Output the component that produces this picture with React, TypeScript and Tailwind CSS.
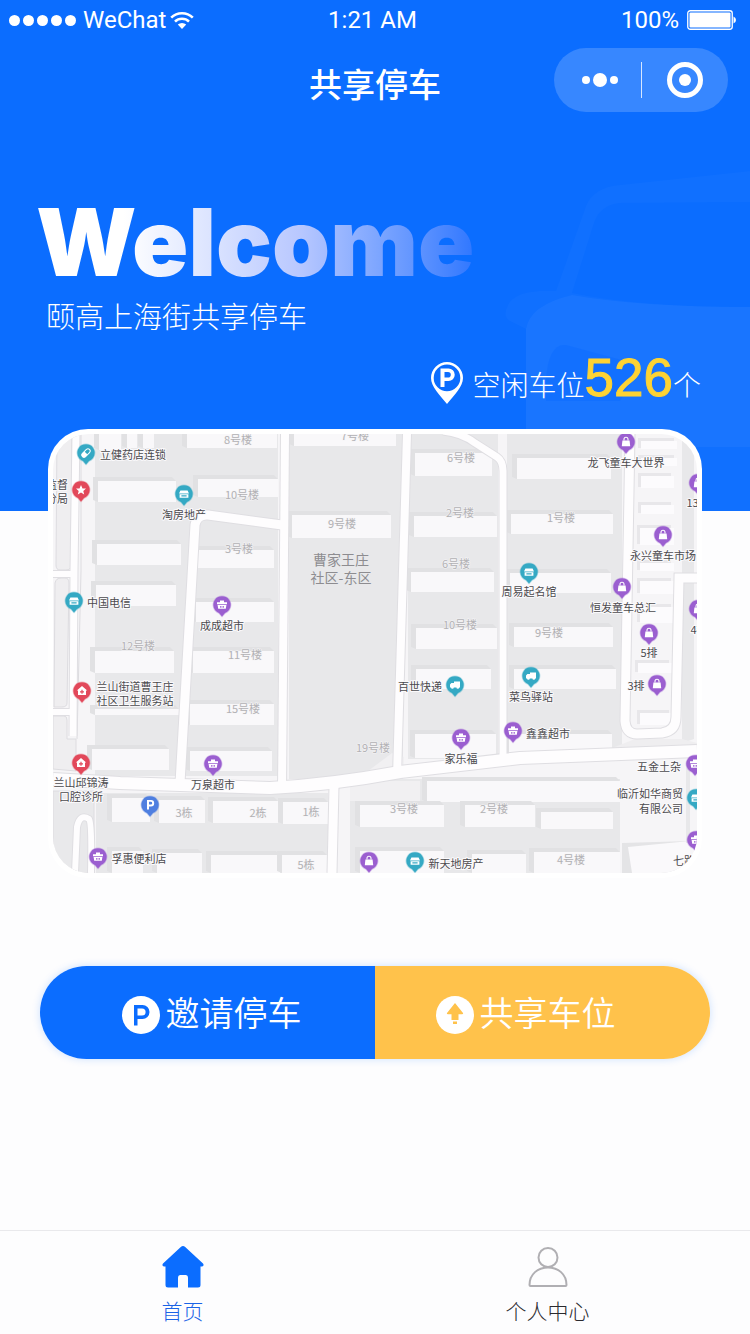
import type { ReactNode } from 'react';

type Point = [number, number];
type Rect = [number, number, number, number];
type PinKind = 'pill' | 'star' | 'store' | 'basket' | 'bag' | 'clinic' | 'truck' | 'parking';

const TEAL = '#35a9c4';
const RED = '#e2485a';
const PURPLE = '#9b5fd0';
const BLUE = '#4f7fe0';

const blocks: Rect[] = [
  [95, 433, 183, 342],
  [289, 433, 114, 345],
  [408, 433, 90, 325],
  [507, 433, 115, 318],
  [602, 433, 20, 318],
  [96, 792, 232, 80],
  [350, 778, 270, 94],
];

const buildings: Rect[] = [
  [99, 433, 22, 16], [127, 433, 10, 14], [143, 433, 11, 14],
  [98, 480, 78, 21], [97, 543, 84, 21], [96, 584, 80, 21], [95, 650, 79, 22], [95, 708, 84, 6], [92, 748, 77, 21],
  [187, 433, 90, 14], [198, 478, 80, 18], [196, 549, 78, 18], [196, 601, 78, 20], [193, 650, 81, 22], [190, 703, 84, 21], [190, 750, 82, 20],
  [294, 433, 102, 12], [292, 514, 99, 23],
  [415, 452, 77, 23], [414, 515, 83, 21], [411, 571, 83, 20], [416, 627, 81, 21], [416, 668, 75, 20], [415, 733, 81, 24],
  [517, 457, 94, 21], [511, 513, 102, 20], [510, 572, 101, 20], [514, 626, 99, 20], [514, 668, 102, 20], [509, 733, 103, 20],
  [112, 797, 38, 24], [159, 799, 46, 23], [213, 800, 65, 22], [283, 801, 45, 22],
  [112, 850, 31, 22], [157, 852, 45, 20], [211, 854, 69, 18], [282, 854, 45, 18],
  [427, 780, 193, 21], [360, 804, 84, 22], [465, 804, 70, 22], [541, 811, 72, 17],
  [360, 850, 84, 22], [472, 853, 54, 19], [534, 851, 86, 21],
];

const eastBuildings: Rect[] = [
  [641, 440, 36, 8], [641, 457, 36, 8], [641, 475, 33, 12], [641, 504, 33, 9], [640, 527, 34, 17],
  [640, 562, 34, 8], [640, 580, 34, 13], [640, 606, 34, 16], [638, 662, 34, 10], [640, 712, 32, 12],
];

const roads: { d: string; w: number }[] = [
  { d: 'M76 433 L74 570 L73 735', w: 7 },
  { d: 'M53 573 H74 M53 711 H70', w: 6 },
  { d: 'M180 782 L195 524 Q197 513 208 514 L282 524', w: 9 },
  { d: 'M285 433 L282 790', w: 8 },
  { d: 'M407 433 L397 775', w: 8 },
  { d: 'M443 430 Q462 432 475 442 L497 456 Q503 460 503 470 V762', w: 7 },
  { d: 'M630 433 L625 720 Q626 733 637 733 L662 732 Q676 730 676 716 L679 577 H697', w: 9 },
  { d: 'M334 785 L332 872', w: 9 },
  { d: 'M75 872 L77 826 Q80 812 89 818 Q92 822 91 872', w: 6 },
  { d: 'M53 778 L120 782 L270 787 Q330 784 400 771 L520 757 L697 750', w: 12 },
];

const greyLabels: [string, number, number][] = [
  ['8号楼', 238, 438], ['7号楼', 355, 434], ['6号楼', 461, 456], ['10号楼', 242, 493], ['9号楼', 342, 522],
  ['2号楼', 460, 511], ['1号楼', 561, 516], ['3号楼', 239, 547], ['6号楼', 456, 562], ['12号楼', 138, 644],
  ['10号楼', 460, 623], ['9号楼', 549, 631], ['11号楼', 245, 653], ['15号楼', 243, 707], ['19号楼', 373, 746],
  ['3栋', 184, 811], ['2栋', 258, 811], ['1栋', 311, 810], ['5栋', 306, 863],
  ['3号楼', 404, 807], ['2号楼', 494, 807], ['4号楼', 571, 858],
];

const placeLabels: [string, number, number][] = [
  ['立健药店连锁', 133, 453], ['监督', 57, 483], ['分局', 57, 497], ['淘房地产', 184, 513], ['中国电信', 109, 601],
  ['成成超市', 222, 624], ['兰山街道曹王庄', 135, 685], ['社区卫生服务站', 135, 699], ['兰山邱锦涛', 81, 781], ['口腔诊所', 81, 795],
  ['万泉超市', 213, 783], ['孚惠便利店', 139, 857], ['龙飞童车大世界', 626, 461], ['13排', 698, 501], ['永兴童车市场', 663, 554],
  ['周易起名馆', 529, 590], ['恒发童车总汇', 623, 606], ['4排', 699, 628], ['5排', 649, 651], ['百世快递', 420, 685],
  ['菜鸟驿站', 531, 695], ['3排', 636, 684], ['鑫鑫超市', 548, 732], ['家乐福', 461, 757], ['五金土杂', 659, 765],
  ['临沂如华商贸', 650, 792], ['有限公司', 661, 807], ['七路', 684, 859], ['新天地房产', 456, 862],
];

const pins: [PinKind, string, number, number][] = [
  ['pill', TEAL, 86, 452], ['star', RED, 81, 489], ['store', TEAL, 184, 493], ['store', TEAL, 74, 600],
  ['basket', PURPLE, 222, 604], ['clinic', RED, 82, 690], ['clinic', RED, 81, 762], ['basket', PURPLE, 213, 763],
  ['parking', BLUE, 150, 804], ['basket', PURPLE, 98, 856], ['bag', PURPLE, 626, 441], ['bag', PURPLE, 698, 482],
  ['bag', PURPLE, 663, 534], ['store', TEAL, 529, 571], ['bag', PURPLE, 622, 586], ['bag', PURPLE, 698, 608],
  ['bag', PURPLE, 649, 632], ['truck', TEAL, 455, 684], ['truck', TEAL, 531, 675], ['bag', PURPLE, 657, 683],
  ['basket', PURPLE, 461, 737], ['basket', PURPLE, 513, 730], ['basket', PURPLE, 695, 763], ['store', TEAL, 696, 797],
  ['basket', PURPLE, 696, 839], ['bag', PURPLE, 369, 860], ['store', TEAL, 415, 860],
];

const glyphs: Record<PinKind, ReactNode> = {
  pill: (
    <g transform="rotate(45)">
      <rect x="-2.2" y="-5" width="4.4" height="10" rx="2.2" fill="none" stroke="#fff" strokeWidth="1" />
      <path d="M-2.2 0 H2.2 V3 A2.2 2.2 0 0 1 -2.2 3Z" fill="#fff" />
    </g>
  ),
  star: <path d="M0 -5 L1.5 -1.6 L5 -1.4 L2.3 0.9 L3.2 4.4 L0 2.5 L-3.2 4.4 L-2.3 0.9 L-5 -1.4 L-1.5 -1.6Z" fill="#fff" />,
  store: <path d="M-3.6 -3.6 H3.6 L5 -0.6 H-5Z M-4.4 0.2 H4.4 V3.8 H-4.4Z M-2.6 1.3 V2.6 H2.6 V1.3Z" fill="#fff" fillRule="evenodd" />,
  basket: <path d="M-2 -4.4 H2 V-2.8 H5 V-0.8 H-5 V-2.8 H-2Z M-4.4 0 H4.4 L3.8 3.8 H-3.8Z M-2 1 V2.8 H-1.2 V1Z M-0.4 1 V2.8 H0.4 V1Z M1.2 1 V2.8 H2 V1Z" fill="#fff" fillRule="evenodd" />,
  bag: (
    <>
      <path d="M-3.6 -1.6 H3.6 L4.2 4.2 H-4.2Z" fill="#fff" />
      <path d="M-2 -1.6 V-2.8 A2 2 0 0 1 2 -2.8 V-1.6" fill="none" stroke="#fff" strokeWidth="1.1" />
    </>
  ),
  clinic: <path d="M0 -5 L5.2 -0.6 H4 V4 H-4 V-0.6 H-5.2Z M-0.6 -1.2 V0.2 H-2 V1.4 H-0.6 V2.8 H0.6 V1.4 H2 V0.2 H0.6 V-1.2Z" fill="#fff" fillRule="evenodd" />,
  truck: <path d="M-1 -3.4 H5 V2.4 H4.2 A1.4 1.4 0 0 1 1.4 2.4 H-1.2 A1.4 1.4 0 0 1 -4 2.4 H-5 V-0.4 L-3.6 -2 H-1Z" fill="#fff" />,
  parking: <path d="M-3 -5 H1 A3.1 3.1 0 0 1 1 1.4 H-1 V4.4 H-3Z M-1 -3.2 V-0.4 H0.8 A1.4 1.4 0 0 0 0.8 -3.2Z" fill="#fff" fillRule="evenodd" />,
};

function Pin({ kind, color, at }: { kind: PinKind; color: string; at: Point }) {
  return (
    <g transform={`translate(${at[0]} ${at[1]})`}>
      <path d="M0 11.5 L-3 8 A8.7 8.7 0 1 1 3 8Z" fill={color} stroke={color} strokeOpacity="0.35" strokeWidth="1.4" strokeLinejoin="round" />
      {glyphs[kind]}
    </g>
  );
}

function ParkingMap() {
  return (
    <svg viewBox="53 433 644 439" role="img" aria-label="停车地图" className="block h-auto w-full rounded-[36px] font-['Noto_Sans_CJK_SC',sans-serif]">
      <rect x="53" y="433" width="644" height="439" fill="#f6f5f7" />
      <g fill="#e9e9eb" stroke="#dddce0" strokeWidth="1">
        <path d="M57 433 H72 L71 564 Q71 569 66 569 H60 Q56 569 56 564Z" fill="#efeef0" />
        <path d="M55 582 Q56 577 61 577 H65 Q69 577 69 582 L67 702 Q67 706 62 706 H54Z" fill="#efeef0" />
        <path d="M53 715 H64 Q67 715 67 719 V738 H76 V770 L53 768Z" fill="#efeef0" />
        <path d="M53 790 H94 V872 H53Z" />
        <path d="M81 433 V570 L77 738" fill="none" />
      </g>
      <g fill="#e8e8ea">
        {blocks.map(([x, y, w, h]) => (
          <rect key={`${x}-${y}`} x={x} y={y} width={w} height={h} />
        ))}
        <path d="M682 433 H694 V738 L682 742Z" />
        <path d="M635 738 L682 738 L697 742 V746 L602 751Z" fill="#efeef0" />
        <path d="M622 842 L690 840 V872 H622Z" fill="#e4e4e6" />
        <path d="M628 846 L690 840 V872 H632Z" fill="#faf9fb" />
        <path d="M686 760 H690 V842 H686Z" />
      </g>
      <path d="M360 776 L392 752 L404 756 V776Z" fill="#f1f0f2" />
      <path d="M350 780 H420 V800 H350Z" fill="#f1f0f2" />
      <g>
        {buildings.map(([x, y, w, h]) => (
          <g key={`${x}-${y}`}>
            <path d={`M${x - 5} ${y - 4} H${x + w - 4} L${x + w} ${y} V${y + h} H${x} L${x - 5} ${y + h - 2}Z`} fill="#e1e1e3" />
            <rect x={x} y={y} width={w} height={h} fill="#f9f8fa" />
          </g>
        ))}
        {eastBuildings.map(([x, y, w, h]) => (
          <g key={`${x}-${y}`}>
            <rect x={x - 3} y={y - 3} width={w} height={h + 2} fill="#e8e7ea" />
            <rect x={x} y={y} width={w} height={h} fill="#fcfbfd" />
          </g>
        ))}
      </g>
      <g fill="none" stroke="#dfdee2">
        {roads.map((road) => (
          <path key={road.d} d={road.d} strokeWidth={road.w + 2} />
        ))}
      </g>
      <g fill="none" stroke="#fefdfe">
        {roads.map((road) => (
          <path key={road.d} d={road.d} strokeWidth={road.w} />
        ))}
      </g>
      <g className="text-[11px]" textAnchor="middle" dominantBaseline="central">
        <g fill="#b2b1b4" stroke="#f6f5f7" strokeWidth="1" paintOrder="stroke">
          {greyLabels.map(([text, x, y]) => (
            <text key={`${x}-${y}`} x={x} y={y}>{text}</text>
          ))}
        </g>
        <g className="text-[14px]" fill="#8d8c90">
          <text x="341" y="558">曹家王庄</text>
          <text x="341" y="576">社区-东区</text>
        </g>
        {pins.map(([kind, color, x, y]) => (
          <Pin key={`${x}-${y}`} kind={kind} color={color} at={[x, y]} />
        ))}
        <g fill="#4b4a4e" stroke="#fbfafc" strokeWidth="2" strokeLinejoin="round" paintOrder="stroke">
          {placeLabels.map(([text, x, y]) => (
            <text key={`${x}-${y}`} x={x} y={y}>{text}</text>
          ))}
        </g>
      </g>
    </svg>
  );
}

function StatusBar() {
  return (
    <div className="grid h-10 grid-cols-[1fr_auto_1fr] items-center pr-[14px] pl-[9px] font-['Roboto',sans-serif] text-[24px]">
      <div className="flex items-center gap-[7px]">
        <div className="flex gap-[3px]">
          {[0, 1, 2, 3, 4].map((n) => (
            <span key={n} className="size-[11px] rounded-full bg-white" />
          ))}
        </div>
        <div className="flex items-center gap-1">
          <span>WeChat</span>
          <svg viewBox="0 0 24 18" className="h-[18px] w-6" fill="none" stroke="#fff" strokeWidth="2.6">
            <path d="M1.2 6.6 A15.4 15.4 0 0 1 22.8 6.6" />
            <path d="M5 10.6 A10 10 0 0 1 19 10.6" />
            <path d="M12 18 L7.8 13.6 A6 6 0 0 1 16.2 13.6Z" fill="#fff" stroke="none" />
          </svg>
        </div>
      </div>
      <span>1:21 AM</span>
      <div className="flex items-center justify-end gap-2">
        <span>100%</span>
        <svg viewBox="0 0 49 20" className="h-5 w-[49px]">
          <rect x="0.75" y="0.75" width="44.5" height="18.5" rx="2.5" fill="none" stroke="#fff" strokeWidth="1.3" />
          <rect x="2.5" y="2.5" width="41" height="15" rx="1" fill="#fff" />
          <path d="M46.5 6.5 Q49 7.5 49 10 Q49 12.5 46.5 13.5Z" fill="#fff" />
        </svg>
      </div>
    </div>
  );
}

function CarBackdrop() {
  return (
    <svg viewBox="500 160 250 350" aria-hidden="true" className="absolute right-0 bottom-0 h-[350px] w-[250px]" fill="#fff">
      <path d="M556 290 L586 205 Q594 186 620 184 L750 170 V201 L620 202 Q600 204 594 222 L572 292 Q640 306 750 306 V510 H526 V328 L510 320 Q502 316 508 304 Q516 288 556 290Z" fillOpacity="0.025" />
      <path d="M572 294 Q640 306 750 306 V446 H700 Q620 446 526 446 V328 Q530 304 572 294Z" fillOpacity="0.04" />
      <path d="M546 380 Q548 342 566 344 L640 364 L620 400 H546Z" fill="#0b6cff" fillOpacity="0.5" />
    </svg>
  );
}

export default function App() {
  return (
    <div className="flex min-h-screen flex-col bg-[#fdfdfe] font-['Liberation_Sans','Noto_Sans_CJK_SC',sans-serif]">
      <header className="relative bg-[#0b6dff] pb-[92px] text-white">
        <CarBackdrop />
        <div className="relative">
          <StatusBar />
          <div className="grid grid-cols-[1fr_auto_1fr] items-center px-[22px] py-2">
            <span />
            <h1 className="pt-3 text-[33px] leading-[40px] font-medium">共享停车</h1>
            <div className="flex h-16 w-[174px] items-center justify-self-end rounded-full bg-white/18">
              <button type="button" aria-label="更多" className="flex h-full w-[87px] items-center justify-center gap-[3px] pl-1">
                <span className="size-2 rounded-full bg-white" />
                <span className="size-[14px] rounded-full bg-white" />
                <span className="size-2 rounded-full bg-white" />
              </button>
              <span className="h-9 w-px bg-white/80" />
              <button type="button" aria-label="关闭" className="flex h-full flex-1 items-center justify-center">
                <span className="flex size-9 items-center justify-center rounded-full border-5 border-white">
                  <span className="size-3 rounded-full bg-white" />
                </span>
              </button>
            </div>
          </div>
          <div className="px-9 pt-[74px]">
            <p className="w-fit bg-linear-to-r from-white from-20% via-[#b9c8ff] via-60% to-[#2f77ff] bg-clip-text font-['Inter',sans-serif] text-[93px] leading-[96px] font-black text-transparent">
              Welcome
            </p>
            <p className="pt-2 pl-[10px] text-[29px] leading-[40px] font-light">颐高上海街共享停车</p>
          </div>
          <div className="flex items-baseline justify-end pt-2 pr-[49px] text-[28px] leading-[64px] font-light">
            <svg viewBox="0 0 32 42" className="mr-[10px] h-[42px] w-8 self-center" fill="#fff">
              <path d="M16 0 A16 16 0 0 1 32 16 C32 25 23 33 16 42 C9 33 0 25 0 16 A16 16 0 0 1 16 0Z M16 2.6 A13.3 13.3 0 1 0 16 29.2 A13.3 13.3 0 1 0 16 2.6Z" fillRule="evenodd" />
              <path d="M9.5 6.5 H17.5 A6.2 6.2 0 0 1 17.5 19 H13.5 V25 H9.5Z M13.5 10 V15.6 H17 A2.8 2.8 0 0 0 17 10Z" fillRule="evenodd" />
            </svg>
            <span>空闲车位</span>
            <span className="text-[53px] font-normal text-[#fdd334] [-webkit-text-stroke:1px_#fdd334]">526</span>
            <span>个</span>
          </div>
        </div>
      </header>

      <main className="relative -mt-[82px] pb-10">
        <section className="mx-12 rounded-[40px] bg-white p-[5px]">
          <ParkingMap />
        </section>
        <div className="mx-10 mt-22 grid h-[93px] grid-cols-2 overflow-hidden rounded-full text-[34px] font-[350] text-white shadow-[0_0_8px_rgba(11,109,255,0.2)]">
          <button type="button" className="flex items-center justify-center gap-[6px] bg-[#0b6dff] pt-1 pl-2">
            <svg viewBox="0 0 38 38" className="size-[38px]">
              <circle cx="19" cy="19" r="19" fill="#fff" />
              <path d="M12 9 H20.5 A7 7 0 0 1 20.5 23 H15.5 V29.5 H12Z M15.5 12.4 V19.6 H20 A3.6 3.6 0 0 0 20 12.4Z" fill="#0b6dff" fillRule="evenodd" />
            </svg>
            邀请停车
          </button>
          <button type="button" className="flex items-center justify-center gap-[6px] bg-[#ffc24b] pt-1 pr-[34px]">
            <svg viewBox="0 0 38 38" className="size-[38px]">
              <circle cx="19" cy="19" r="19" fill="#fff" />
              <path d="M19 7 L27 17 Q27.5 18.3 26 18.3 H22.5 V24 H15.5 V18.3 H12 Q10.5 18.3 11 17Z M17 25.5 H21 V28 H17Z" fill="#ffc24b" />
            </svg>
            共享车位
          </button>
        </div>
      </main>

      <nav className="mt-auto grid h-[104px] grid-cols-2 border-t border-[#e9e9ec] pr-5 text-[21px] leading-[28px] font-light">
        <a href="#home" className="flex flex-col items-center gap-[10px] pt-[15px] text-[#1a63e6]">
          <svg viewBox="0 0 42 42" className="size-[42px]" fill="#0b6dff">
            <path d="M18.8 1 Q21 -0.8 23.2 1 L41 17.5 Q42.5 20 40 20.5 H38.5 V39 Q38.5 41.5 36 41.5 H26 V32 Q26 29 23.5 29 H18.5 Q16 29 16 32 V41.5 H6 Q3.5 41.5 3.5 39 V20.5 H2 Q-0.5 20 1 17.5Z" />
          </svg>
          首页
        </a>
        <a href="#me" className="flex flex-col items-center gap-[10px] pt-[15px] text-[#2a2a2e]">
          <svg viewBox="0 0 42 42" className="size-[42px]" fill="none" stroke="#b0afb3" strokeWidth="2">
            <circle cx="21" cy="11.5" r="9.5" />
            <path d="M2.5 39 C2.500 28 11 21.500 21 21.500 S39.500 28 39.500 39 Q39.500 40 38.500 40 H3.500 Q2.500 40 2.500 39Z" />
          </svg>
          个人中心
        </a>
      </nav>
    </div>
  );
}
